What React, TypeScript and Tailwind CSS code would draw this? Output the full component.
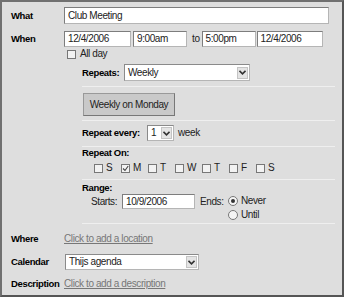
import { ReactNode } from 'react';

const Chevron = () => (
  <svg width="7" height="5" viewBox="0 0 7 5">
    <path d="M0.5 0.8 L3.5 3.8 L6.5 0.8" fill="none" stroke="#333" strokeWidth="1.6" />
  </svg>
);

const TextBox = ({ value, className }: { value: string; className: string }) => (
  <div
    className={`bg-white border border-[#b5b5b5] border-t-[#7d7d7d] border-l-[#7d7d7d] flex items-center pl-[3px] text-[10px] tracking-[-0.4px] text-[#222] whitespace-nowrap ${className}`}
  >
    {value}
  </div>
);

const Select = ({ value, className }: { value: string; className: string }) => (
  <div
    className={`bg-white border border-[#b5b5b5] border-t-[#8a8a8a] border-l-[#8a8a8a] flex items-center text-[10px] tracking-[-0.4px] text-[#222] ${className}`}
  >
    <span className="flex-1 pl-[3px]">{value}</span>
    <span className="w-[11px] h-[12px] mr-[1px] bg-[#e4e4e4] border border-[#c4c4c4] flex items-center justify-center">
      <Chevron />
    </span>
  </div>
);

const Checkbox = ({ checked }: { checked?: boolean }) => (
  <span className="w-[9px] h-[9px] border border-[#777] bg-[#f2f2f2] flex items-center justify-center">
    {checked && (
      <svg width="7" height="7" viewBox="0 0 7 7">
        <path d="M1 3.5 L3 5.5 L6.2 1" fill="none" stroke="#444" strokeWidth="1.1" />
      </svg>
    )}
  </span>
);

const Radio = ({ checked }: { checked?: boolean }) => (
  <span className="w-[10px] h-[10px] rounded-full border border-[#777] bg-[#f4f4f4] flex items-center justify-center">
    {checked && <span className="w-[4px] h-[4px] rounded-full bg-[#333]" />}
  </span>
);

const Sep = () => <div className="h-px bg-[#efefef]" />;

const Label = ({ children, className = '' }: { children: ReactNode; className?: string }) => (
  <span className={`font-bold text-[9.5px] tracking-[-0.35px] text-black whitespace-nowrap ${className}`}>
    {children}
  </span>
);

const Txt = ({ children, className = '' }: { children: ReactNode; className?: string }) => (
  <span className={`text-[10px] tracking-[-0.4px] text-[#222] whitespace-nowrap ${className}`}>{children}</span>
);

const days = ['S', 'M', 'T', 'W', 'T', 'F', 'S'];

const App = () => {
  return (
    <div className="w-[345px] h-[299px] bg-white font-['Liberation_Sans',Arial,sans-serif] text-[10px] leading-none">
      <div className="w-[344px] h-[297px] border-2 border-[#707070] border-r-[#555] border-b-[#555] bg-[#dedede] pl-[9px] pt-[5px]">
        {/* what */}
        <div className="flex items-center">
          <Label className="w-[53px]">What</Label>
          <TextBox value="Club Meeting" className="w-[265px] h-[17px]" />
        </div>

        {/* when */}
        <div className="flex items-center mt-[7px]">
          <Label className="w-[53px]">When</Label>
          <TextBox value="12/4/2006" className="w-[67px] h-[16px]" />
          <TextBox value="9:00am" className="w-[54px] h-[16px] ml-[2px]" />
          <Txt className="ml-[5px] mr-[2px]">to</Txt>
          <TextBox value="5:00pm" className="w-[54px] h-[16px]" />
          <TextBox value="12/4/2006" className="w-[66px] h-[16px] ml-[1px]" />
        </div>
        <div className="flex items-center mt-[2px] ml-[56px]">
          <Checkbox />
          <Txt className="ml-[4px]">All day</Txt>
        </div>

        {/* repeat options */}
        <div className="ml-[71px] w-[253px]">
          <div className="flex items-center mt-[5px]">
            <Label className="w-[42px]">Repeats:</Label>
            <Select value="Weekly" className="w-[126px] h-[17px]" />
          </div>
          <div className="mt-[5px]">
            <Sep />
          </div>
          <button className="mt-[6px] ml-px w-[92px] h-[23px] bg-[#c9c9c9] border border-[#999] border-b-[#777] border-r-[#777] text-[10px] tracking-[-0.4px] text-[#222] whitespace-nowrap">
            Weekly on Monday
          </button>
          <div className="mt-[4px]">
            <Sep />
          </div>
          <div className="flex items-center mt-[4px]">
            <Label className="w-[65px]">Repeat every:</Label>
            <Select value="1" className="w-[27px] h-[16px]" />
            <Txt className="ml-[4px]">week</Txt>
          </div>
          <div className="mt-[5px]">
            <Sep />
          </div>
          <div className="mt-[1px]">
            <Label>Repeat On:</Label>
          </div>
          <div className="flex items-center mt-[5px] ml-[12px]">
            {days.map((d, i) => (
              <div key={i} className="flex items-center w-[27px]">
                <Checkbox checked={i === 1} />
                <Txt className="ml-[3px]">{d}</Txt>
              </div>
            ))}
          </div>
          <div className="mt-[6px]">
            <Sep />
          </div>
          <div className="mt-[3px]">
            <Label>Range:</Label>
          </div>
          <div className="flex items-start mt-[1px] ml-[9px]">
            <Txt className="mt-[3px] w-[31px]">Starts:</Txt>
            <TextBox value="10/9/2006" className="w-[73px] h-[15px]" />
            <Txt className="mt-[3px] ml-[5px] w-[28px]">Ends:</Txt>
            <div className="flex flex-col gap-[4px] mt-[2px]">
              <div className="flex items-center">
                <Radio checked />
                <Txt className="ml-[3px]">Never</Txt>
              </div>
              <div className="flex items-center">
                <Radio />
                <Txt className="ml-[3px]">Until</Txt>
              </div>
            </div>
          </div>
          <div className="mt-[3px]">
            <Sep />
          </div>
        </div>

        {/* where / calendar / description */}
        <div className="flex items-center mt-[10px]">
          <Label className="w-[53px]">Where</Label>
          <Txt className="text-[#777] underline">Click to add a location</Txt>
        </div>
        <div className="flex items-center mt-[10px]">
          <Label className="w-[54px]">Calendar</Label>
          <Select value="Thijs agenda" className="w-[134px] h-[16px]" />
        </div>
        <div className="flex items-center mt-[9px]">
          <Label className="w-[53px]">Description</Label>
          <Txt className="text-[#777] underline">Click to add a description</Txt>
        </div>
      </div>
    </div>
  );
};

export default App;
